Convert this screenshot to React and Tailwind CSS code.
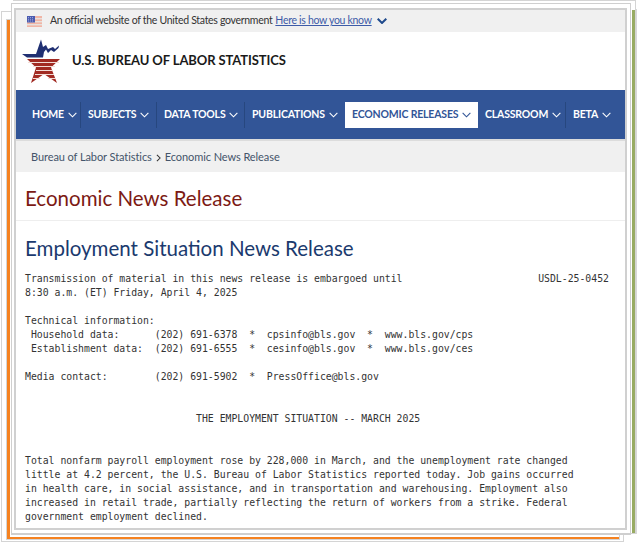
import React from "react";
const sans = { fontFamily: 'Lato, "Noto Sans", sans-serif' };
function Chev({ className = "" }) {
  return (
    <svg viewBox="0 0 10 6" className={"w-[9px] h-[6px] " + className} fill="none" stroke="currentColor" strokeWidth="1.2">
      <path d="M0.7 0.7 L5 5 L9.3 0.7" />
    </svg>
  );
}
function Item({ label, w, active, sep }) {
  return (
    <div className={`${w} h-[26px] flex items-center pl-[7px] gap-[4px] shrink-0 ${active ? "bg-white text-[#325597]" : "text-white"} ${sep ? "border-r border-[#27477f]" : ""}`}>
      <span className="text-[10.5px] font-bold tracking-[-0.18px] whitespace-nowrap">{label}</span>
      <Chev />
    </div>
  );
}
const text1 = `Transmission of material in this news release is embargoed until                       USDL-25-0452
8:30 a.m. (ET) Friday, April 4, 2025

Technical information:
 Household data:      (202) 691-6378  *  cpsinfo@bls.gov  *  www.bls.gov/cps
 Establishment data:  (202) 691-6555  *  cesinfo@bls.gov  *  www.bls.gov/ces

Media contact:        (202) 691-5902  *  PressOffice@bls.gov


                             THE EMPLOYMENT SITUATION -- MARCH 2025


Total nonfarm payroll employment rose by 228,000 in March, and the unemployment rate changed
little at 4.2 percent, the U.S. Bureau of Labor Statistics reported today. Job gains occurred
in health care, in social assistance, and in transportation and warehousing. Employment also
increased in retail trade, partially reflecting the return of workers from a strike. Federal
government employment declined.`;
export default function App() {
  return (
    <div className="relative w-[640px] h-[544px] bg-white overflow-hidden" style={sans}>
      <div className="absolute left-[1px] top-[11px] w-[623px] h-[531px] border border-[#d4d4d4] bg-white" />
      <div className="absolute left-[7px] top-[20px] w-[612px] h-[519px] border-l-[3px] border-b-[2px] border-[#f58220] bg-white outline outline-[#d4d4d4]" />
      <div className="absolute left-[317px] top-[9px] w-[320px] h-[525px] border-r-[2px] border-r-[#d8d8d8] bg-white border-b border-b-[#d4d4d4]" />
      <div className="absolute left-[632px] top-[10px] w-[3px] h-[523px] bg-[#98ab63]" />
      <div className="absolute left-[13px] top-[0px] w-[623px] h-[534px] border-t border-r border-[#d4d4d4]" />
      <div className="absolute left-[11px] top-[3px] w-[620px] h-[532px] border border-[#cfcfcf] border-b-2 bg-white" />
      <div className="relative ml-[14px] w-[613px] h-[522px] border-2 border-[#d0d0d0] bg-white overflow-hidden translate-y-[8px]">
        <div className="h-[22px] bg-[#f0f0f0] flex items-center pl-[11px] text-[#333] text-[10.5px] tracking-[-0.3px]">
          <svg viewBox="0 0 15 11" className="w-[15px] h-[11px] mr-[8px] shrink-0">
            <rect width="15" height="11" fill="#f0b5a6" />
            <rect y="2" width="15" height="1.4" fill="#e9e1dc" />
            <rect y="5" width="15" height="1.4" fill="#e9e1dc" />
            <rect y="8" width="15" height="1.4" fill="#e9e1dc" />
            <rect width="8" height="6.5" fill="#4a5bb0" />
            <path d="M1 1.5h6M1 3.3h6M1 5h6" stroke="#b9c0ea" strokeWidth="0.7" strokeDasharray="1 1" />
          </svg>
          <span className="whitespace-nowrap">An official website of the United States government</span>
          <span className="ml-[3px] whitespace-nowrap underline text-[#3d5ba8]">Here is how you know</span>
          <Chev className="ml-[5px] text-[#1f4a8c] w-[10px] [&>path]:[stroke-width:2]" />
        </div>
        <div className="h-[58px] flex items-center bg-white pl-[6px]">
          <svg viewBox="22 37 39 45" className="w-[39px] h-[45px] shrink-0">
            <path d="M22 52 L36 52 L41 37.5 L43 45 L46 43 L48 47 L53 45 L55 47 L59 43.5 L58.5 46 L54 50 L51 48 L48 51 L46 47.5 L44 50 L43 55.5 L27 55.5 Z" fill="#1f2f72" />
            <path d="M27 57 L60 57 L51 65.5 L57 81 L44 72 L31 81 L36 65.5 Z" fill="#a12a22" />
            <path d="M28 60.5H59M33 64.5H55M36 68.5H53M35 72.5H54" stroke="#f2dcd6" strokeWidth="1" />
            <path d="M33 76.5H40M48 76.5H56" stroke="#f2dcd6" strokeWidth="1" />
          </svg>
          <span className="ml-[11px] text-[13px] font-bold text-[#1a1a1a] tracking-[-0.1px] whitespace-nowrap">U.S. BUREAU OF LABOR STATISTICS</span>
        </div>
        <div className="h-[49px] bg-[#325597] flex items-center pl-[9px]">
          <Item label="HOME" w="w-[56px]" sep />
          <Item label="SUBJECTS" w="w-[76px]" sep />
          <Item label="DATA TOOLS" w="w-[88px]" sep />
          <Item label="PUBLICATIONS" w="w-[100px]" />
          <Item label="ECONOMIC RELEASES" w="w-[133px]" active />
          <Item label="CLASSROOM" w="w-[88px]" sep />
          <Item label="BETA" w="w-[50px]" />
        </div>
        <div className="h-[2px] bg-[#dcdcdc]" />
        <div className="h-[31px] bg-[#f0f0f0] flex items-center pt-[2px] pl-[15px] text-[11px] tracking-[-0.08px] text-[#44546a]">
          <span>Bureau of Labor Statistics</span>
          <svg viewBox="0 0 6 10" className="w-[5px] h-[8px] mx-[4px]" fill="none" stroke="#333" strokeWidth="1.3"><path d="M1 1l4 4-4 4" /></svg>
          <span>Economic News Release</span>
        </div>
        <div className="px-[9px]">
          <h1 className="mt-[12px] text-[20.5px] leading-[28px] text-[#7c1a14]">Economic News Release</h1>
          <div className="h-px bg-[#eeeeee] -mx-[9px] mt-[8px]" />
          <h2 className="mt-[13px] text-[20.5px] leading-[28px] text-[#1b3a6e]">Employment Situation News Release</h2>
          <pre className="mt-[10px] text-[#333] text-[9.8px] leading-[14px]" style={{ fontFamily: '"DejaVu Sans Mono", monospace' }}>{text1}</pre>
        </div>
      </div>
    </div>
  );
}
